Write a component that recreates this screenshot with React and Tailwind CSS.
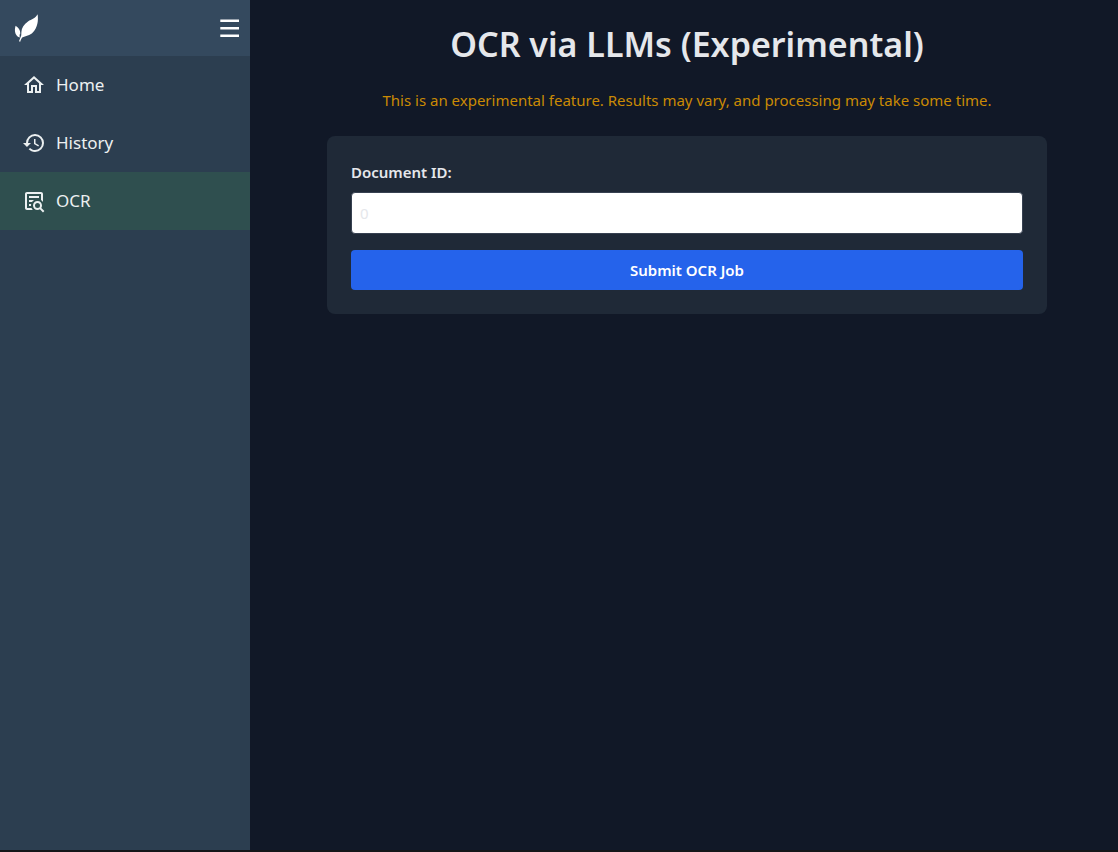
import { useState } from "react";

const icons = {
  home: "M12 5.69L17 10.19V18H15V12H9V18H7V10.19L12 5.69M12 3L2 12H5V20H11V14H13V20H19V12H22",
  history:
    "M13.5,8H12V13L16.28,15.54L17,14.33L13.5,12.25V8M13,3A9,9 0 0,0 4,12H1L4.96,16.03L9,12H6A7,7 0 0,1 13,5A7,7 0 0,1 20,12A7,7 0 0,1 13,19C11.07,19 9.32,18.21 8.06,16.94L6.64,18.36C8.27,20 10.5,21 13,21A9,9 0 0,0 22,12A9,9 0 0,0 13,3",
  ocr: "M15.5,12C18,12 20,14 20,16.5C20,17.38 19.75,18.21 19.31,18.9L22.39,22L21,23.39L17.88,20.32C17.19,20.75 16.37,21 15.5,21C13,21 11,19 11,16.5C11,14 13,12 15.5,12M15.5,14A2.5,2.5 0 0,0 13,16.5A2.5,2.5 0 0,0 15.5,19A2.5,2.5 0 0,0 18,16.5A2.5,2.5 0 0,0 15.5,14M5,3H19C20.11,3 21,3.89 21,5V13.03C20.5,12.23 19.81,11.54 19,11V5H5V19H9.5C9.81,19.75 10.26,20.42 10.81,21H5C3.89,21 3,20.11 3,19V5C3,3.89 3.89,3 5,3M7,7H17V9H7V7M7,11H12.03C11.23,11.5 10.54,12.19 10,13H7V11M7,15H9.17C9.06,15.5 9,16 9,16.5V17H7V15Z",
};

const links = [
  { label: "Home", icon: icons.home, href: "#home" },
  { label: "History", icon: icons.history, href: "#history" },
  { label: "OCR", icon: icons.ocr, href: "#ocr", active: true },
];

function Logo() {
  return (
    <svg className="h-8 w-8" viewBox="0 0 32 32" fill="#fff" aria-hidden="true">
      <path d="M27.6 2.2C28.6 9 27.4 15.6 23 20.2C20 23.6 15.6 23.8 12.2 25.4C11.2 26.6 10.8 28 10.2 29.8L9 29.2L10.6 25C11.6 23.6 11.2 22.4 11.4 20C11.6 15.6 14 12 18 9.4C21.6 7 25.6 6.2 27.6 2.2Z" />
      <path d="M5.6 13.8C8.4 15.8 10.4 18.2 10.3 21.4C9.4 22.2 9.6 24 9.8 25.6C6.2 24.8 3.6 20 5.6 13.8Z" />
    </svg>
  );
}

function Sidebar() {
  return (
    <aside className="w-[250px] shrink-0 bg-[#2c3e50]">
      <div className="flex h-14 items-center justify-between bg-[#34495e] px-2.5">
        <Logo />
        <button type="button" aria-label="Toggle menu" className="flex h-6 w-5 items-center justify-center text-white">
          <svg className="h-6 w-5" viewBox="0 0 20 24" fill="currentColor" aria-hidden="true">
            <path d="M0.3 3.5H19V6H0.3ZM0.3 11H19V13.5H0.3ZM0.3 18.5H19V21H0.3Z" />
          </svg>
        </button>
      </div>
      <nav>
        {links.map(({ label, icon, href, active }) => (
          <a
            key={label}
            href={href}
            aria-current={active ? "page" : undefined}
            className={`flex h-[58px] items-center gap-2.5 px-[22px] text-[17px] text-[#ecf0f1] ${active ? "bg-[#2f4f4f]" : ""}`}
          >
            <svg className="h-6 w-6" viewBox="0 0 24 24" fill="currentColor" aria-hidden="true">
              <path d={icon} />
            </svg>
            {label}
          </a>
        ))}
      </nav>
    </aside>
  );
}

export default function App() {
  const [documentId, setDocumentId] = useState("0");

  return (
    <div className="flex min-h-screen gap-1.5 border-b-2 border-[#141619] bg-[#111827] font-['Noto_Sans',sans-serif] text-[15px] leading-6 text-gray-200">
      <Sidebar />
      <main className="min-w-0 flex-1 p-6">
        <h1 className="mb-6 text-center text-[34px] leading-10 font-semibold">OCR via LLMs (Experimental)</h1>
        <p className="mb-6 text-center text-[#ca8a04]">
          This is an experimental feature. Results may vary, and processing may take some time.
        </p>
        <form
          onSubmit={(event) => event.preventDefault()}
          className="mx-auto max-w-[720px] rounded-lg bg-[#1f2937] p-6"
        >
          <label htmlFor="document-id" className="mb-2 block font-semibold">
            Document ID:
          </label>
          <input
            id="document-id"
            type="text"
            inputMode="numeric"
            value={documentId}
            onChange={(event) => setDocumentId(event.target.value)}
            className="mb-4 block w-full rounded border border-[#374151] bg-white p-2 text-gray-200"
          />
          <button type="submit" className="block w-full rounded bg-[#2563eb] px-4 py-2 font-semibold text-white">
            Submit OCR Job
          </button>
        </form>
      </main>
    </div>
  );
}
